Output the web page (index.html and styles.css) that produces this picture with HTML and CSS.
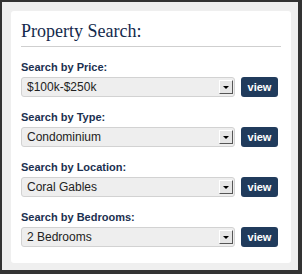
FILE: index.html
```html
<!DOCTYPE html>
<html lang="en">
<head>
    <meta charset="UTF-8">
    <title>Property Search</title>
    <link rel="stylesheet" href="styles.css">
</head>
<body>
    <div class="frame">
        <div class="panel">
            <h2 class="title">Property Search:</h2>
            <form class="search">
                <div class="field">
                    <label for="price">Search by Price:</label>
                    <div class="row">
                        <div class="select-box">
                            <select id="price"><option>$100k-$250k</option></select>
                            <span class="arrow"></span>
                        </div>
                        <button type="button">view</button>
                    </div>
                </div>
                <div class="field">
                    <label for="type">Search by Type:</label>
                    <div class="row">
                        <div class="select-box">
                            <select id="type"><option>Condominium</option></select>
                            <span class="arrow"></span>
                        </div>
                        <button type="button">view</button>
                    </div>
                </div>
                <div class="field">
                    <label for="location">Search by Location:</label>
                    <div class="row">
                        <div class="select-box">
                            <select id="location"><option>Coral Gables</option></select>
                            <span class="arrow"></span>
                        </div>
                        <button type="button">view</button>
                    </div>
                </div>
                <div class="field">
                    <label for="beds">Search by Bedrooms:</label>
                    <div class="row">
                        <div class="select-box">
                            <select id="beds"><option>2 Bedrooms</option></select>
                            <span class="arrow"></span>
                        </div>
                        <button type="button">view</button>
                    </div>
                </div>
            </form>
        </div>
    </div>
</body>
</html>
```

FILE: styles.css
```css
body, html {
    margin: 0;
    padding: 0;
}

.frame {
    width: 302px;
    height: 274px;
    box-sizing: border-box;
    border: solid #333333;
    border-width: 2px 4px 4px 2px;
    background: #efefef;
    padding: 9px 7px 7px 9px;
}

.panel {
    height: 100%;
    box-sizing: border-box;
    background: #fff;
    border-radius: 3px;
    padding: 9px 10px 0 10px;
}

.title {
    margin: 0;
    padding-bottom: 4px;
    border-bottom: 1px solid #cfcfcf;
    font-family: "Liberation Serif", serif;
    font-weight: normal;
    font-size: 18px;
    line-height: 22px;
    color: #142a4c;
}

.search {
    margin: 0;
    padding-top: 13px;
}

.field {
    margin-bottom: 13px;
}

.field label {
    display: block;
    margin-bottom: 3px;
    font-family: "Liberation Sans", Arial, sans-serif;
    font-weight: bold;
    font-size: 11px;
    line-height: 14px;
    color: #1b3050;
}

.row {
    display: flex;
    gap: 6px;
}

.select-box {
    width: 214px;
    height: 20px;
    box-sizing: border-box;
    display: flex;
    align-items: center;
    background: #eeeeee;
    border: 1px solid #d2d2d2;
    border-radius: 3px;
}

.select-box select {
    flex: 1;
    min-width: 0;
    height: 18px;
    margin: 0;
    padding: 0 0 0 5px;
    border: none;
    background: transparent;
    -webkit-appearance: none;
    appearance: none;
    font-family: "Liberation Sans", Arial, sans-serif;
    font-size: 12px;
    color: #222;
    outline: none;
}

.arrow {
    position: relative;
    width: 14px;
    height: 14px;
    box-sizing: border-box;
    margin-right: 1px;
    background: #e6e6e6;
    border: 1px solid;
    border-color: #fff #555 #555 #fff;
}

.arrow::before {
    content: "";
    position: absolute;
    left: 3px;
    top: 5px;
    border-left: 3px solid transparent;
    border-right: 3px solid transparent;
    border-top: 3px solid #000;
}

button {
    width: 37px;
    height: 20px;
    padding: 0;
    border: none;
    border-radius: 3px;
    background: #203b5c;
    color: #fff;
    font-family: "Liberation Sans", Arial, sans-serif;
    font-weight: bold;
    font-size: 11px;
    cursor: pointer;
}
```
